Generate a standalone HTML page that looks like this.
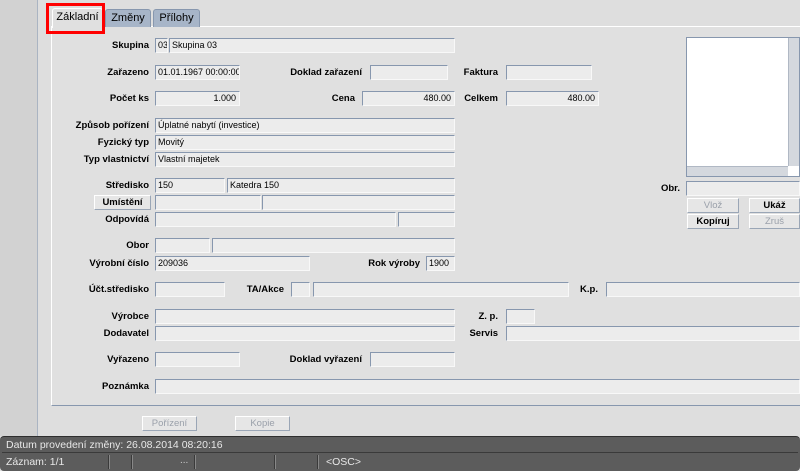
<!DOCTYPE html>
<html><head><meta charset="utf-8"><style>
*{margin:0;padding:0;box-sizing:border-box}
body{width:800px;height:471px;overflow:hidden;background:#dedede;font-family:"Liberation Sans",Arial,sans-serif;font-size:9px;color:#000;position:relative}
div,span{position:absolute}
.l{font-weight:bold;text-align:right;white-space:nowrap;height:15px;line-height:15px;font-size:9.5px}
.f{height:15px;background:#ececec;border:1px solid #f8f8f8;border-top-color:#8797ae;border-left-color:#8797ae;line-height:13px;padding-left:2px;white-space:nowrap;overflow:hidden;font-size:9px}
.r{text-align:right;padding-right:3px}
.b{height:15px;background:#e6e6e6;border:1px solid #9aa6b6;border-top-color:#fff;border-left-color:#fff;text-align:center;line-height:13px;font-weight:bold;font-size:9.5px}
.d{color:#9aa0aa;font-weight:normal}
.tab{top:9px;height:18px;background:#a7b5c8;border:1px solid #8797ae;border-bottom:none;border-radius:3px 3px 0 0;text-align:center;line-height:16px;font-size:11px}
.sep{width:2px;top:455px;height:14px;border-left:1px solid #3a3a3a;border-right:1px solid #888}
</style></head><body>
<div style="left:0;top:0;width:38px;height:436px;background:#d2d2d2;border-right:1px solid #aab4c2"></div>
<div style="left:51px;top:26px;width:749px;height:380px;background:#e0e0e0;border-left:1px solid #fff;border-top:1px solid #fff;border-bottom:1px solid #8797ae"></div>
<div class="tab" style="left:52px;top:8px;width:51px;height:20px;background:#e0e0e0;border-color:#fff;font-size:11px">Základní</div>
<div class="tab" style="left:105px;width:46px">Změny</div>
<div class="tab" style="left:153px;width:47px">Přílohy</div>
<div style="left:46px;top:3px;width:59px;height:31px;border:3px solid #f00"></div>

<div class="l" style="right:651px;top:38px">Skupina</div>
<div class="f" style="left:155px;top:38px;width:13px">03</div>
<div class="f" style="left:169px;top:38px;width:286px">Skupina 03</div>

<div class="l" style="right:651px;top:65px">Zařazeno</div>
<div class="f" style="left:155px;top:65px;width:85px">01.01.1967 00:00:00</div>
<div class="l" style="right:438px;top:65px">Doklad zařazení</div>
<div class="f" style="left:370px;top:65px;width:78px"></div>
<div class="l" style="right:302px;top:65px">Faktura</div>
<div class="f" style="left:506px;top:65px;width:86px"></div>

<div class="l" style="right:651px;top:91px">Počet ks</div>
<div class="f r" style="left:155px;top:91px;width:85px">1.000</div>
<div class="l" style="right:445px;top:91px">Cena</div>
<div class="f r" style="left:362px;top:91px;width:93px">480.00</div>
<div class="l" style="right:302px;top:91px">Celkem</div>
<div class="f r" style="left:506px;top:91px;width:93px">480.00</div>

<div class="l" style="right:651px;top:118px">Způsob pořízení</div>
<div class="f" style="left:155px;top:118px;width:300px">Úplatné nabytí (investice)</div>
<div class="l" style="right:651px;top:135px">Fyzický typ</div>
<div class="f" style="left:155px;top:135px;width:300px">Movitý</div>
<div class="l" style="right:651px;top:152px">Typ vlastnictví</div>
<div class="f" style="left:155px;top:152px;width:300px">Vlastní majetek</div>

<div class="l" style="right:651px;top:178px">Středisko</div>
<div class="f" style="left:155px;top:178px;width:70px">150</div>
<div class="f" style="left:227px;top:178px;width:228px">Katedra 150</div>
<div class="b" style="left:94px;top:195px;width:57px">Umístění</div>
<div class="f" style="left:155px;top:195px;width:106px"></div>
<div class="f" style="left:262px;top:195px;width:193px"></div>
<div class="l" style="right:651px;top:212px">Odpovídá</div>
<div class="f" style="left:155px;top:212px;width:241px"></div>
<div class="f" style="left:398px;top:212px;width:57px"></div>

<div class="l" style="right:651px;top:238px">Obor</div>
<div class="f" style="left:155px;top:238px;width:55px"></div>
<div class="f" style="left:212px;top:238px;width:243px"></div>
<div class="l" style="right:651px;top:256px">Výrobní číslo</div>
<div class="f" style="left:155px;top:256px;width:155px">209036</div>
<div class="l" style="right:380px;top:256px">Rok výroby</div>
<div class="f" style="left:426px;top:256px;width:29px">1900</div>

<div class="l" style="right:651px;top:282px">Účt.středisko</div>
<div class="f" style="left:155px;top:282px;width:70px"></div>
<div class="l" style="right:516px;top:282px">TA/Akce</div>
<div class="f" style="left:291px;top:282px;width:19px"></div>
<div class="f" style="left:313px;top:282px;width:256px"></div>
<div class="l" style="right:202px;top:282px">K.p.</div>
<div class="f" style="left:606px;top:282px;width:194px"></div>

<div class="l" style="right:651px;top:309px">Výrobce</div>
<div class="f" style="left:155px;top:309px;width:300px"></div>
<div class="l" style="right:302px;top:309px">Z. p.</div>
<div class="f" style="left:506px;top:309px;width:29px"></div>
<div class="l" style="right:651px;top:326px">Dodavatel</div>
<div class="f" style="left:155px;top:326px;width:300px"></div>
<div class="l" style="right:302px;top:326px">Servis</div>
<div class="f" style="left:506px;top:326px;width:294px"></div>

<div class="l" style="right:651px;top:352px">Vyřazeno</div>
<div class="f" style="left:155px;top:352px;width:85px"></div>
<div class="l" style="right:438px;top:352px">Doklad vyřazení</div>
<div class="f" style="left:370px;top:352px;width:85px"></div>
<div class="l" style="right:651px;top:379px">Poznámka</div>
<div class="f" style="left:155px;top:379px;width:645px"></div>

<div style="left:686px;top:37px;width:114px;height:140px;background:#fff;border:1px solid #8797ae"></div>
<div style="left:788px;top:38px;width:11px;height:128px;background:#d4d8de;border-left:1px solid #b0b8c4"></div>
<div style="left:687px;top:166px;width:101px;height:10px;background:#d4d8de;border-top:1px solid #b0b8c4"></div>
<div class="l" style="right:120px;top:181px">Obr.</div>
<div class="f" style="left:686px;top:181px;width:114px"></div>
<div class="b d" style="left:687px;top:198px;width:52px">Vlož</div>
<div class="b" style="left:749px;top:198px;width:51px">Ukáž</div>
<div class="b" style="left:687px;top:214px;width:52px">Kopíruj</div>
<div class="b d" style="left:749px;top:214px;width:51px">Zruš</div>

<div class="b d" style="left:142px;top:416px;width:55px">Pořízení</div>
<div class="b d" style="left:235px;top:416px;width:55px">Kopie</div>

<div style="left:0;top:436px;width:800px;height:35px;background:#5c5c5c;border-top:1px solid #2e2e2e;border-radius:4px"></div>
<div style="left:2px;top:452px;width:796px;height:1px;background:#3a3a3a"></div>
<div style="left:6px;top:438px;color:#e8e8e8;font-size:10.5px;line-height:14px">Datum provedení změny: 26.08.2014 08:20:16</div>
<div style="left:6px;top:455px;color:#e8e8e8;font-size:10.5px;line-height:14px">Záznam: 1/1</div>
<div class="sep" style="left:108px"></div>
<div class="sep" style="left:131px"></div>
<div class="sep" style="left:194px"></div>
<div class="sep" style="left:274px"></div>
<div class="sep" style="left:317px"></div>
<div style="left:180px;top:455px;color:#ccc;font-size:10px">...</div>
<div style="left:326px;top:455px;color:#e8e8e8;font-size:10.5px;line-height:14px">&lt;OSC&gt;</div>
</body></html>
